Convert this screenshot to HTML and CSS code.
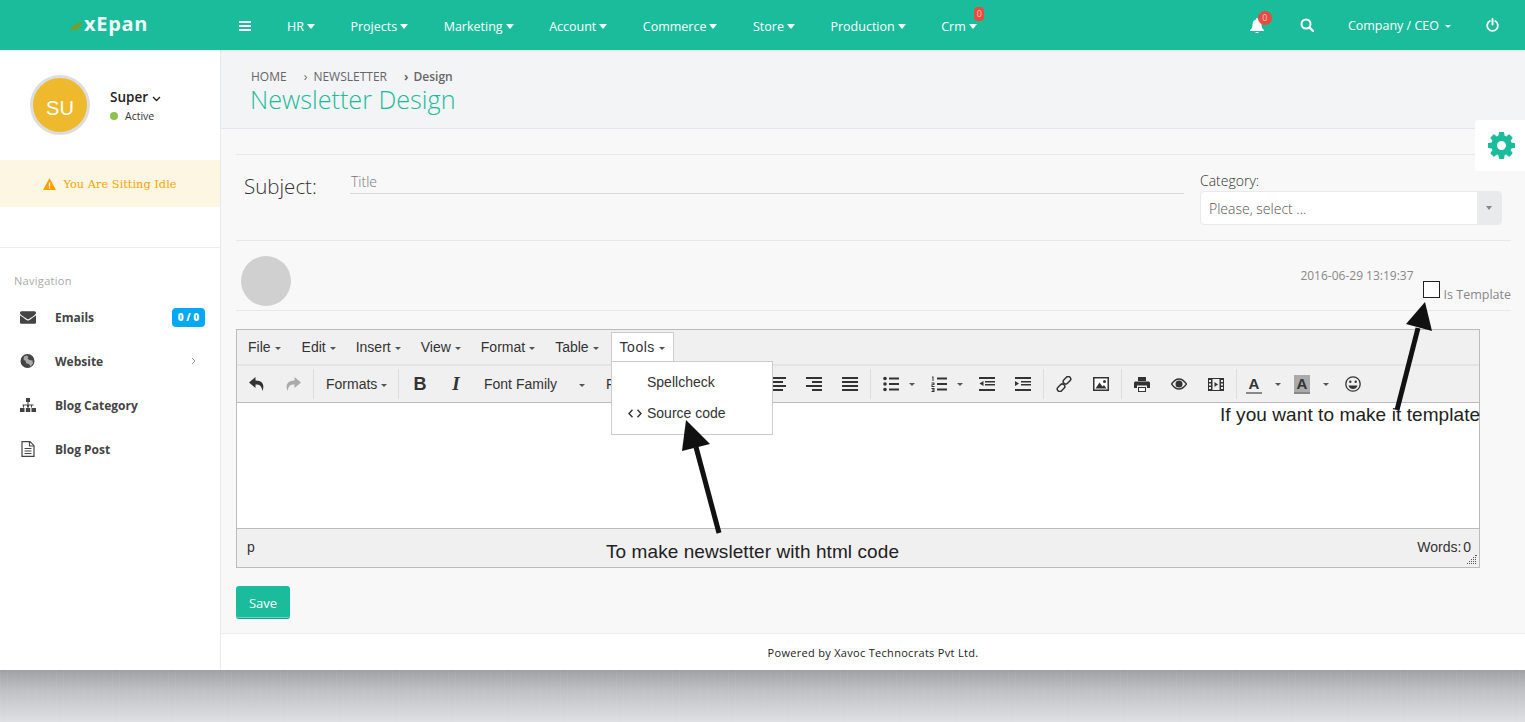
FILE: index.html
```html
<!DOCTYPE html>
<html lang="en">
<head>
    <meta charset="UTF-8">
    <meta name="viewport" content="width=device-width, initial-scale=1.0">
    <title>Newsletter Design</title>
    <link rel="stylesheet" href="styles.css">
</head>
<body>
    <svg class="defs" width="0" height="0">
        <symbol id="i-cog" viewBox="0 0 1536 1536"><path d="M1024 768q0-106-75-181t-181-75-181 75-75 181 75 181 181 75 181-75 75-181zm512-109v222q0 12-8 23t-20 13l-185 28q-19 54-39 91 35 50 107 138 10 12 10 25t-9 23q-27 37-99 108t-94 71q-12 0-26-9l-138-108q-44 23-91 38-16 136-29 186-7 28-36 28h-222q-14 0-24.5-8.5t-11.5-21.5l-28-184q-49-16-90-37l-141 107q-10 9-25 9-14 0-25-11-126-114-165-168-7-10-7-23 0-12 8-23 15-21 51-66.5t54-70.5q-27-50-41-99l-183-27q-13-2-21-12.5t-8-23.5v-222q0-12 8-23t19-13l186-28q14-46 39-92-40-57-107-138-10-12-10-24 0-10 9-23 26-36 98.5-107.5t94.5-71.5q13 0 26 10l138 107q44-23 91-38 16-136 29-186 7-28 36-28h222q14 0 24.5 8.5t11.5 21.5l28 184q49 16 90 37l142-107q9-9 24-9 13 0 25 10 129 119 165 170 7 8 7 22 0 12-8 23-15 21-51 66.5t-54 70.5q26 50 41 98l183 28q13 2 21 12.5t8 23.5z"/></symbol>
        <symbol id="i-mail" viewBox="0 0 1792 1792"><path d="M1792 710v794q0 66-47 113t-113 47h-1472q-66 0-113-47t-47-113v-794q44 49 101 87 362 246 497 345 57 42 92.5 65.5t94.5 48 110 24.5h2q51 0 110-24.5t94.5-48 92.5-65.5q170-123 498-345 57-39 100-87zm0-294q0 79-49 151t-122 123q-376 261-468 325-10 7-42.5 30.5t-54 38-52 32.5-57.5 27-50 9h-2q-23 0-50-9t-57.5-27-52-32.5-54-38-42.5-30.5q-91-64-262-182.5t-205-142.5q-62-42-117-115.5t-55-136.5q0-78 41.5-130t118.5-52h1472q65 0 112.5 47t47.5 113z"/></symbol>
        <symbol id="i-align-c" viewBox="0 0 16 16"><path d="M0 1h16v2H0zM3 5h10v2H3zM0 9h16v2H0zM3 13h10v2H3z"/></symbol>
        <symbol id="i-align-r" viewBox="0 0 16 16"><path d="M0 1h16v2H0zM6 5h10v2H6zM0 9h16v2H0zM6 13h10v2H6z"/></symbol>
        <symbol id="i-align-j" viewBox="0 0 16 16"><path d="M0 1h16v2H0zM0 5h16v2H0zM0 9h16v2H0zM0 13h16v2H0z"/></symbol>
    </svg>

    <div class="page">
        <header class="topbar">
            <div class="logo">
                <svg class="leaf" width="12" height="10" viewBox="0 0 12 10"><path d="M0 10C1 4 5 1 12 0 11 6 7 9 2 8z" fill="#6fa032"/></svg>
                <span>xEpan</span>
            </div>
            <nav class="menu">
                <svg class="burger" width="12" height="10" viewBox="0 0 12 10"><path d="M0 0h12v2H0zM0 4h12v2H0zM0 8h12v2H0z" fill="#fff"/></svg>
                <a>HR<i class="caret"></i></a>
                <a>Projects<i class="caret"></i></a>
                <a>Marketing<i class="caret"></i></a>
                <a>Account<i class="caret"></i></a>
                <a>Commerce<i class="caret"></i></a>
                <a>Store<i class="caret"></i></a>
                <a>Production<i class="caret"></i></a>
                <a class="has-badge">Crm<i class="caret"></i><b class="crm-badge">0</b></a>
            </nav>
            <div class="top-right">
                <span class="bell">
                    <svg width="14" height="15" viewBox="0 0 14 15"><path d="M7 0c.6 0 1 .4 1 1v.6c2.300.5 3.500 2.400 3.500 4.900 0 3 .8 4.200 2.500 5.500v1H0v-1c1.700-1.300 2.500-2.500 2.500-5.500C2.500 4 3.700 2.100 6 1.600V1c0-.6.400-1 1-1zM5.300 14h3.400c0 .6-.7 1-1.700 1s-1.700-.4-1.700-1z" fill="#fff"/></svg>
                    <b class="bell-badge">0</b>
                </span>
                <svg class="search" width="14" height="14" viewBox="0 0 14 14"><circle cx="6" cy="6" r="4.500" fill="none" stroke="#fff" stroke-width="2"/><path d="M9.500 9.500L13 13" stroke="#fff" stroke-width="2.400" stroke-linecap="round"/></svg>
                <span class="company">Company / CEO<i class="caret small"></i></span>
                <svg class="power" width="13" height="14" viewBox="0 0 13 14"><path d="M3.800 3A5.300 5.300 0 1 0 9.200 3" fill="none" stroke="#fff" stroke-width="1.800" stroke-linecap="round"/><path d="M6.500 1v5.500" stroke="#fff" stroke-width="2" stroke-linecap="round"/></svg>
            </div>
        </header>

        <div class="layout">
            <aside class="sidebar">
                <div class="user">
                    <div class="user-pic">SU</div>
                    <div>
                        <div class="user-name">Super
                            <svg width="9" height="6" viewBox="0 0 9 6"><path d="M1 1l3.500 3.500L8 1" fill="none" stroke="#222" stroke-width="1.300"/></svg>
                        </div>
                        <div class="user-status"><i class="dot"></i>Active</div>
                    </div>
                </div>
                <div class="idle">
                    <svg width="13" height="12" viewBox="0 0 12 11"><path d="M6 0l6 11H0z" fill="#ffa000"/><path d="M5.400 4h1.200v3.800H5.400zM5.400 8.500h1.200v1.200H5.400z" fill="#fdf6e3"/></svg>
                    You Are Sitting Idle
                </div>
                <div class="side-nav">
                    <div class="nav-title">Navigation</div>
                    <a class="nav-item">
                        <svg class="nav-icon" width="16" height="16"><use href="#i-mail"/></svg>
                        <span>Emails</span>
                        <b class="count">0 / 0</b>
                    </a>
                    <a class="nav-item">
                        <svg class="nav-icon" width="16" height="14" viewBox="0 0 16 14"><circle cx="7.500" cy="7" r="7"/><path d="M4 2.500l3-1 1.500 1.500-1 1.500 2 1.500 3 .5.500 3-2.500 3-1.500-2.500-2.500-.5-1-2.500-2-1.500z" fill="#fff" opacity=".55"/></svg>
                        <span>Website</span>
                        <svg class="chev" width="5" height="8" viewBox="0 0 5 8"><path d="M1 1l3 3-3 3" fill="none" stroke="#999" stroke-width="1"/></svg>
                    </a>
                    <a class="nav-item">
                        <svg class="nav-icon" width="16" height="14" viewBox="0 0 16 14"><path d="M6 0h4v4H6zM7.500 4h1v3h-1zM2.500 6.500h11v1h-1.500v2h-1v-2h-2v2h-2v-2H4v2H3v-2h-.5zM0 10h4.500v4H0zM5.800 10h4.500v4H5.800zM11.500 10H16v4h-4.500z"/></svg>
                        <span>Blog Category</span>
                    </a>
                    <a class="nav-item">
                        <svg class="nav-icon" width="14" height="16" viewBox="0 0 14 16"><path d="M1 .7h8l4 4v10.600H1z" fill="none" stroke="#444" stroke-width="1.200"/><path d="M8.500 1v4h4.500M3.500 7.500h7M3.500 10h7M3.500 12.500h7" fill="none" stroke="#444" stroke-width="1.100"/></svg>
                        <span>Blog Post</span>
                    </a>
                </div>
            </aside>

            <main class="main">
                <div class="page-head">
                    <div class="crumbs">
                        <span>HOME</span>
                        <span class="crumb-sep">&rsaquo;</span><span>NEWSLETTER</span>
                        <span class="crumb-sep bold">&rsaquo;</span><strong>Design</strong>
                    </div>
                    <h1>Newsletter Design</h1>
                </div>

                <div class="content">
                    <div class="subject-row">
                        <label class="subject-label">Subject:</label>
                        <div class="title-input">Title</div>
                        <div class="category">
                            <div class="category-label">Category:</div>
                            <div class="select">
                                <span>Please, select ...</span>
                                <span class="select-btn"><i></i></span>
                            </div>
                        </div>
                    </div>

                    <div class="meta-row">
                        <div class="grey-pic"></div>
                        <div class="date">2016-06-29 13:19:37</div>
                        <div class="template"><i class="checkbox"></i>Is Template</div>
                    </div>

                    <div class="editor">
                        <div class="ed-menu">
                            <span class="ed-item">File<i class="ed-caret"></i></span>
                            <span class="ed-item">Edit<i class="ed-caret"></i></span>
                            <span class="ed-item">Insert<i class="ed-caret"></i></span>
                            <span class="ed-item">View<i class="ed-caret"></i></span>
                            <span class="ed-item">Format<i class="ed-caret"></i></span>
                            <span class="ed-item table-item">Table<i class="ed-caret"></i></span>
                            <span class="ed-item open">Tools<i class="ed-caret"></i></span>
                        </div>
                        <div class="ed-tools">
                            <div class="tb-group">
                                <span class="tb-btn"><svg width="16" height="16" viewBox="0 0 16 16"><path d="M6.500 1L0 6.500 6.500 12V8.500c4 0 6 1 7 6.500 2-5 1-10.500-7-10.500z" fill="#333"/></svg></span>
                                <span class="tb-btn"><svg width="16" height="16" viewBox="0 0 16 16"><path d="M9.500 1L16 6.500 9.500 12V8.500c-4 0-6 1-7 6.500-2-5-1-10.500 7-10.500z" fill="#aaa"/></svg></span>
                            </div>
                            <div class="tb-group">
                                <span class="tb-text formats">Formats<i class="ed-caret"></i></span>
                            </div>
                            <div class="tb-group">
                                <span class="tb-btn glyph-b">B</span>
                                <span class="tb-btn glyph-i">I</span>
                                <span class="tb-text font-family">Font Family<i class="ed-caret"></i></span>
                                <span class="tb-text font-sizes">F</span>
                                <span class="tb-btn"></span>
                                <span class="tb-btn"><svg class="fill-dark" width="16" height="16"><use href="#i-align-c"/></svg></span>
                                <span class="tb-btn"><svg class="fill-dark" width="16" height="16"><use href="#i-align-r"/></svg></span>
                                <span class="tb-btn"><svg class="fill-dark" width="16" height="16"><use href="#i-align-j"/></svg></span>
                            </div>
                            <div class="tb-group">
                                <span class="tb-split">
                                    <span class="tb-btn"><svg class="fill-dark" width="16" height="16" viewBox="0 0 16 16"><circle cx="2" cy="2.500" r="1.800"/><circle cx="2" cy="8" r="1.800"/><circle cx="2" cy="13.500" r="1.800"/><path d="M6 1.500h10v2H6zM6 7h10v2H6zM6 12.500h10v2H6z"/></svg></span><i class="ed-caret"></i>
                                </span>
                                <span class="tb-split">
                                    <span class="tb-btn"><svg class="fill-dark" width="16" height="16" viewBox="0 0 16 16"><path d="M1 .5h1.500V5H1.500V1.500H1zM.5 6.500h3v2.600h-2v1h2v.9h-3V8.300h2v-.9h-2zM.5 12h3v4h-3v-.9h2v-.7h-1.500v-.8h1.500v-.7h-2zM6 1.500h10v2H6zM6 7h10v2H6zM6 12.500h10v2H6z"/></svg></span><i class="ed-caret"></i>
                                </span>
                                <span class="tb-btn"><svg class="fill-dark" width="16" height="16" viewBox="0 0 16 16"><path d="M0 1h16v2H0zM6 5h10v1.500H6zM6 8h10v1.500H6zM0 13h16v2H0zM4.500 5v5L.5 7.500z"/></svg></span>
                                <span class="tb-btn"><svg class="fill-dark" width="16" height="16" viewBox="0 0 16 16"><path d="M0 1h16v2H0zM6 5h10v1.500H6zM6 8h10v1.500H6zM0 13h16v2H0zM0 5l4 2.500L0 10z"/></svg></span>
                            </div>
                            <div class="tb-group spaced">
                                <span class="tb-btn"><svg width="16" height="16" viewBox="0 0 16 16"><g fill="none" stroke="#333" stroke-width="1.500"><rect x="8.500" y="0" width="5" height="8.500" rx="2.500" transform="rotate(45 11 4.200)"/><rect x="2.500" y="7.500" width="5" height="8.500" rx="2.500" transform="rotate(45 5 11.800)"/></g></svg></span>
                                <span class="tb-btn"><svg width="16" height="14" viewBox="0 0 16 14"><path d="M0 0h16v14H0z" fill="#333"/><path d="M1.500 1.500h13v11h-13z" fill="#fff"/><path d="M2.500 11.500l4-6 3 4 1.500-1.500 2.500 3.500z" fill="#333"/><circle cx="11.500" cy="4.500" r="1.500" fill="#333"/></svg></span>
                            </div>
                            <div class="tb-group spaced">
                                <span class="tb-btn"><svg width="16" height="15" viewBox="0 0 16 15"><path d="M4 0h8v4H4zM1.500 4.500h13c.8 0 1.500.7 1.500 1.500v5h-3V8.500H3V11H0V6c0-.8.700-1.500 1.500-1.500z" fill="#333"/><path d="M4 10h8v5H4z" fill="#333"/><path d="M5 11h6v3H5z" fill="#fff"/></svg></span>
                                <span class="tb-btn"><svg width="16" height="12" viewBox="0 0 16 12"><path d="M.5 6C3 2.500 5.500 1 8 1s5 1.500 7.500 5C13 9.500 10.500 11 8 11S3 9.500.5 6z" fill="none" stroke="#333" stroke-width="1.300"/><circle cx="8" cy="6" r="3.500" fill="#333"/></svg></span>
                                <span class="tb-btn"><svg width="16" height="13" viewBox="0 0 16 13"><path d="M0 0h16v13H0z" fill="#333"/><path d="M4.500 1h7v11h-7zM1 2h2v2H1zM1 5.500h2v2H1zM1 9h2v2H1zM13 2h2v2h-2zM13 5.500h2v2h-2zM13 9h2v2h-2z" fill="#efefef"/><path d="M6.500 4l3.500 2.500L6.500 9z" fill="#333"/></svg></span>
                            </div>
                            <div class="tb-group last">
                                <span class="tb-color"><span class="color-a">A</span></span><i class="ed-caret color-caret"></i>
                                <span class="tb-color"><span class="color-a bg">A</span></span><i class="ed-caret color-caret"></i>
                                <span class="tb-btn"><svg width="16" height="16" viewBox="0 0 16 16"><circle cx="8" cy="8" r="7.200" fill="none" stroke="#333" stroke-width="1.300"/><circle cx="5.300" cy="5.800" r="1.200" fill="#333"/><circle cx="10.700" cy="5.800" r="1.200" fill="#333"/><path d="M3.500 9.500h9C12 12 10 13 8 13s-4-1-4.500-3.500z" fill="#333"/></svg></span>
                            </div>
                        </div>
                        <div class="ed-body"></div>
                        <div class="ed-status">
                            <span>p</span>
                            <span class="words">Words: 0</span>
                            <svg class="resize" width="10" height="10" viewBox="0 0 10 10"><path d="M8 0h2v1H8zM6 2h1v1H6zM8 2h1v1H8zM4 4h1v1H4zM6 4h1v1H6zM8 4h1v1H8zM2 6h1v1H2zM4 6h1v1H4zM6 6h1v1H6zM8 6h1v1H8zM0 8h1v1H0zM2 8h1v1H2zM4 8h1v1H4zM6 8h1v1H6zM8 8h1v1H8z" fill="#555"/></svg>
                        </div>
                    </div>

                    <button class="save">Save</button>

                    <div class="gear-tab">
                        <svg width="27" height="27" fill="#1bbc9b"><use href="#i-cog"/></svg>
                    </div>
                </div>

                <footer class="footer">Powered by Xavoc Technocrats Pvt Ltd.</footer>
            </main>
        </div>
    </div>
    <div class="below"></div>

    <!-- menu and notes drawn on top of the screenshot -->
    <div class="tools-menu">
        <div class="tools-row">Spellcheck</div>
        <div class="tools-row">
            <svg class="code-icon" width="14" height="9" viewBox="0 0 14 9"><path d="M4.500 .7L1 4.500l3.500 3.800M9.500 .7L13 4.500 9.500 8.300" fill="none" stroke="#333" stroke-width="1.400"/></svg>
            Source code
        </div>
    </div>
    <svg class="arrows" width="1525" height="722" viewBox="0 0 1525 722">
        <path d="M719 533L696 447" stroke="#111" stroke-width="5"/>
        <path d="M686 420L682 451 710 444z" fill="#111"/>
        <path d="M1397 410L1418 328" stroke="#111" stroke-width="5"/>
        <path d="M1425 302L1406 324 1432 331z" fill="#111"/>
    </svg>
    <div class="note note-template">If you want to make it template</div>
    <div class="note note-html">To make newsletter with html code</div>
</body>
</html>
```

FILE: styles.css
```css
* {
    box-sizing: border-box;
}
html, body {
    margin: 0;
    height: 722px;
    overflow: hidden;
}
body {
    position: relative;
    font-family: "Open Sans", sans-serif;
    font-size: 13px;
    color: #444;
    background-color: #dfe1e5;
}
.defs {
    position: absolute;
}
i {
    font-style: normal;
}
.page {
    height: 670px;
    display: flex;
    flex-direction: column;
    background-color: #fff;
}
.below {
    height: 52px;
    background:
        repeating-linear-gradient(90deg, rgba(255, 255, 255, 0.03) 0 1px, transparent 1px 7px),
        linear-gradient(#9fa1a5, #bfc1c5 40%, #dee0e4);
}

/* top bar */
.topbar {
    height: 50px;
    flex: none;
    position: relative;
    display: flex;
    align-items: center;
    background-color: #1bbc9b;
    color: #fff;
    box-shadow: 0 1px 2px rgba(0, 0, 0, 0.08);
}
.logo {
    width: 239px;
    padding-left: 70px;
    display: flex;
    align-items: center;
    font-size: 20px;
    font-weight: 700;
    letter-spacing: 0.7px;
    color: #eef8f5;
}
.logo span {
    margin-top: -3px;
    margin-left: 2px;
}
.leaf {
    margin-top: 3px;
}
.menu {
    margin-top: 2px;
    display: flex;
    align-items: center;
    gap: 35.5px;
    font-size: 12.5px;
    white-space: nowrap;
}
.burger {
    margin-top: -1px;
    margin-right: 0.5px;
}
.has-badge {
    position: relative;
}
.caret {
    display: inline-block;
    margin-left: 3px;
    vertical-align: 2px;
    border-top: 5px solid #fff;
    border-left: 4px solid transparent;
    border-right: 4px solid transparent;
}
.caret.small {
    margin-left: 6px;
    border-top-width: 3px;
    border-left-width: 3px;
    border-right-width: 3px;
}
.crm-badge {
    position: absolute;
    left: 33px;
    top: -11px;
    width: 10px;
    height: 14px;
    border-radius: 4px;
    background-color: #e74c3c;
    color: #fbd;
    font-size: 9px;
    font-weight: 400;
    line-height: 14px;
    text-align: center;
}
.top-right {
    margin-left: auto;
    padding-right: 26px;
    display: flex;
    align-items: center;
}
.bell {
    position: relative;
    display: flex;
}
.bell-badge {
    position: absolute;
    left: 8px;
    top: -7px;
    width: 14px;
    height: 14px;
    border-radius: 50%;
    background-color: #e74c3c;
    color: #fbd;
    font-size: 9px;
    font-weight: 400;
    line-height: 14px;
    text-align: center;
}
.search {
    margin-left: 36px;
}
.company {
    margin-left: 34px;
    font-size: 12.5px;
}
.power {
    margin-left: 35px;
}

/* sidebar */
.layout {
    flex: 1;
    display: flex;
    min-height: 0;
}
.sidebar {
    width: 221px;
    flex: none;
    border-right: 1px solid #e6e9ee;
    background-color: #fff;
}
.user {
    height: 110px;
    padding: 25px 0 0 30px;
    display: flex;
    gap: 20px;
}
.user-pic {
    width: 60px;
    height: 60px;
    border-radius: 50%;
    border: 3px solid #ddd;
    background-color: #eeb92c;
    color: #fff;
    font-family: "Liberation Sans", sans-serif;
    font-size: 20px;
    line-height: 60px;
    text-align: center;
}
.user-name {
    margin-top: 12px;
    font-size: 13.5px;
    font-weight: 600;
    line-height: 20px;
    color: #222;
}
.user-status {
    font-size: 10.5px;
    line-height: 18px;
    color: #333;
    display: flex;
    align-items: center;
}
.dot {
    width: 8px;
    height: 8px;
    margin-right: 7px;
    border-radius: 50%;
    background-color: #8cc34b;
}
.idle {
    height: 47px;
    display: flex;
    align-items: center;
    justify-content: center;
    gap: 7px;
    background-color: #fdf6e3;
    color: #ffa500;
    font-family: "DejaVu Serif", serif;
    font-size: 11.4px;
}
.side-nav {
    margin-top: 40px;
    border-top: 1px solid #eceef1;
    padding-top: 25px;
}
.nav-title {
    padding-left: 14px;
    font-size: 11px;
    line-height: 16px;
    letter-spacing: 0.3px;
    color: #aaa;
}
.nav-item {
    height: 44px;
    padding: 0 15px 0 20px;
    display: flex;
    align-items: center;
    font-size: 12px;
    font-weight: 700;
    color: #444;
}
.nav-item:first-of-type {
    margin-top: 6px;
}
.nav-icon {
    width: 16px;
    fill: #444;
    flex: none;
    margin-right: 19px;
}
.count {
    margin-left: auto;
    width: 33px;
    height: 19px;
    border-radius: 4px;
    background-color: #03a9f4;
    color: #fff;
    font-size: 10px;
    line-height: 19px;
    text-align: center;
}
.chev {
    margin-left: auto;
    margin-right: 9px;
}

/* main column */
.main {
    flex: 1;
    min-width: 0;
    display: flex;
    flex-direction: column;
}
.page-head {
    height: 79px;
    flex: none;
    padding: 19px 0 0 30px;
    background-color: #f3f4f6;
    border-bottom: 1px solid #e3e7ec;
}
.crumbs {
    font-size: 12px;
    line-height: 16px;
    color: #666;
}
.crumb-sep {
    margin-left: 14px;
    margin-right: 6px;
}
.crumb-sep.bold {
    margin-left: 14px;
    margin-right: 5px;
    font-weight: 700;
}
.crumbs strong {
    font-weight: 600;
}
h1 {
    margin: -2px 0 0 -1px;
    font-size: 25.2px;
    font-weight: 300;
    line-height: 32px;
    color: #1bbc9b;
}
.content {
    flex: 1;
    position: relative;
    padding: 25px 14px 0 15px;
    background-color: #f8f8f8;
}
.subject-row {
    height: 87px;
    border-top: 1px solid #e8e8e8;
    border-bottom: 1px solid #e8e8e8;
    padding-top: 16px;
    display: grid;
    grid-template-columns: 114px 834px 318px;
    align-items: start;
}
.subject-label {
    margin-top: -1px;
    padding-left: 8px;
    font-size: 20.5px;
    font-weight: 300;
    line-height: 32px;
    color: #333;
}
.title-input {
    height: 23px;
    padding-left: 1px;
    border-bottom: 1px solid #d8d8d8;
    font-size: 14px;
    font-weight: 300;
    line-height: 21px;
    color: #777;
}
.category {
    margin-left: 16px;
}
.category-label {
    font-size: 14px;
    font-weight: 300;
    line-height: 20px;
    color: #333;
}
.select {
    height: 34px;
    display: flex;
    align-items: center;
    justify-content: space-between;
    padding-left: 8px;
    border: 1px solid #e8eaed;
    border-radius: 4px;
    background-color: #fff;
    font-size: 14px;
    font-weight: 300;
    color: #555;
    overflow: hidden;
}
.select-btn {
    width: 24px;
    height: 100%;
    display: flex;
    align-items: center;
    justify-content: center;
    background-color: #e8eaec;
}
.select-btn i {
    border-top: 4px solid #888;
    border-left: 3px solid transparent;
    border-right: 3px solid transparent;
}
.meta-row {
    height: 70px;
    padding: 15px 0 0 5px;
    display: flex;
    align-items: flex-start;
    border-bottom: 1px solid #e8e8e8;
}
.grey-pic {
    width: 50px;
    height: 50px;
    border-radius: 50%;
    background-color: #d0d0d0;
}
.date {
    margin-left: auto;
    margin-top: 12px;
    font-size: 12px;
    line-height: 16px;
    color: #888;
}
.template {
    margin-left: 9px;
    margin-top: 25px;
    display: flex;
    align-items: flex-end;
    font-size: 12.5px;
    line-height: 16px;
    color: #888;
}
.checkbox {
    width: 17px;
    height: 17px;
    margin-right: 4px;
    margin-bottom: 5px;
    border: 1.500px solid #222;
    background-color: #fff;
}

/* editor */
.editor {
    width: 1244px;
    height: 239px;
    margin-top: 18px;
    border: 1px solid #bbb;
    display: flex;
    flex-direction: column;
    font-family: "Liberation Sans", sans-serif;
    font-size: 14px;
    color: #333;
    background-color: #f0f0f0;
}
.ed-menu {
    height: 36px;
    flex: none;
    padding: 2px 0 0 2px;
    display: flex;
    gap: 2px;
    border-bottom: 2px solid #e4e4e4;
}
.ed-item {
    height: 32px;
    padding: 0 8px;
    border: 1px solid transparent;
    line-height: 29px;
    white-space: nowrap;
}
.ed-item:first-child,
.ed-item.table-item {
    margin-right: 1px;
}
.ed-item.open {
    background-color: #fff;
    border-color: #ccc;
    border-bottom: 0;
    letter-spacing: 0.5px;
}
.ed-caret {
    display: inline-block;
    margin-left: 4px;
    vertical-align: 2px;
    border-top: 3px solid #555;
    border-left: 3px solid transparent;
    border-right: 3px solid transparent;
}
.ed-tools {
    height: 37px;
    flex: none;
    padding: 3px 0 0 2px;
    display: flex;
    align-items: flex-start;
    border-bottom: 1px solid #bbb;
}
.tb-group {
    height: 30px;
    display: flex;
    align-items: center;
    padding-right: 2px;
    margin-right: 2px;
    border-right: 1px solid #ddd;
}
.tb-group.spaced {
    gap: 1px;
}
.tb-group.last {
    border-right: 0;
}
.tb-btn {
    width: 36px;
    height: 30px;
    flex: none;
    display: flex;
    align-items: center;
    justify-content: center;
}
.glyph-b {
    margin-left: 1px;
    font-size: 18px;
    font-weight: 700;
}
.glyph-i {
    font-family: "Liberation Serif", serif;
    font-size: 19px;
    font-weight: 700;
    font-style: italic;
}
.tb-text {
    white-space: nowrap;
    overflow: hidden;
}
.formats {
    width: 80px;
    padding-left: 10px;
}
.font-family {
    width: 121px;
    padding-left: 10px;
}
.font-family .ed-caret {
    margin-left: 22px;
}
.font-sizes {
    width: 129px;
    padding-left: 11px;
}
.fill-dark {
    fill: #333;
}
.tb-split {
    width: 48px;
    flex: none;
    display: flex;
    align-items: center;
}
.tb-split .ed-caret {
    margin: 0;
}
.tb-color {
    width: 30px;
    display: flex;
    justify-content: center;
}
.color-a {
    width: 16px;
    height: 19px;
    border-bottom: 2px solid #888;
    font-weight: 700;
    font-size: 15px;
    line-height: 17px;
    text-align: center;
}
.color-a.bg {
    background-color: #aaa;
}
.color-caret {
    margin: 0 6px;
}
.ed-body {
    flex: 1;
    background-color: #fff;
}
.ed-status {
    height: 39px;
    flex: none;
    position: relative;
    padding: 0 8px 2px 10px;
    display: flex;
    align-items: center;
    justify-content: space-between;
    border-top: 1px solid #bbb;
}
.words {
    word-spacing: -2px;
}
.resize {
    position: absolute;
    right: 2px;
    bottom: 2px;
}
.save {
    display: block;
    width: 54px;
    height: 33px;
    margin-top: 18px;
    padding: 1px 0 0;
    border: 0;
    border-bottom: 1px solid #10a586;
    border-radius: 3px;
    background-color: #1bbc9b;
    box-shadow: inset 0 -1px 0 rgba(255, 255, 255, 0.35);
    color: #fff;
    font-family: "Open Sans", sans-serif;
    font-size: 13px;
}
.gear-tab {
    position: absolute;
    right: 0;
    top: -9px;
    width: 50px;
    height: 51px;
    padding-left: 2px;
    display: flex;
    align-items: center;
    justify-content: center;
    background-color: #fff;
    border-radius: 3px 0 0 3px;
}
.footer {
    height: 37px;
    flex: none;
    border-top: 1px solid #eee;
    background-color: #fff;
    color: #222;
    font-size: 11px;
    line-height: 37px;
    text-align: center;
    letter-spacing: 0.3px;
}

/* overlays */
.tools-menu {
    position: absolute;
    left: 611px;
    top: 361px;
    width: 162px;
    height: 74px;
    padding-top: 5px;
    border: 1px solid #ccc;
    background-color: #fff;
    font-family: "Liberation Sans", sans-serif;
    font-size: 14px;
    color: #333;
}
.tools-row {
    height: 31px;
    padding-left: 35px;
    position: relative;
    line-height: 31px;
}
.code-icon {
    position: absolute;
    left: 16px;
    top: 11px;
}
.arrows {
    position: absolute;
    left: 0;
    top: 0;
    pointer-events: none;
}
.note {
    position: absolute;
    font-family: "Liberation Sans", sans-serif;
    font-size: 19px;
    line-height: 22px;
    letter-spacing: 0.08px;
    color: #222;
    white-space: nowrap;
}
.note-template {
    left: 1220px;
    top: 404px;
}
.note-html {
    left: 606px;
    top: 541px;
}
```
